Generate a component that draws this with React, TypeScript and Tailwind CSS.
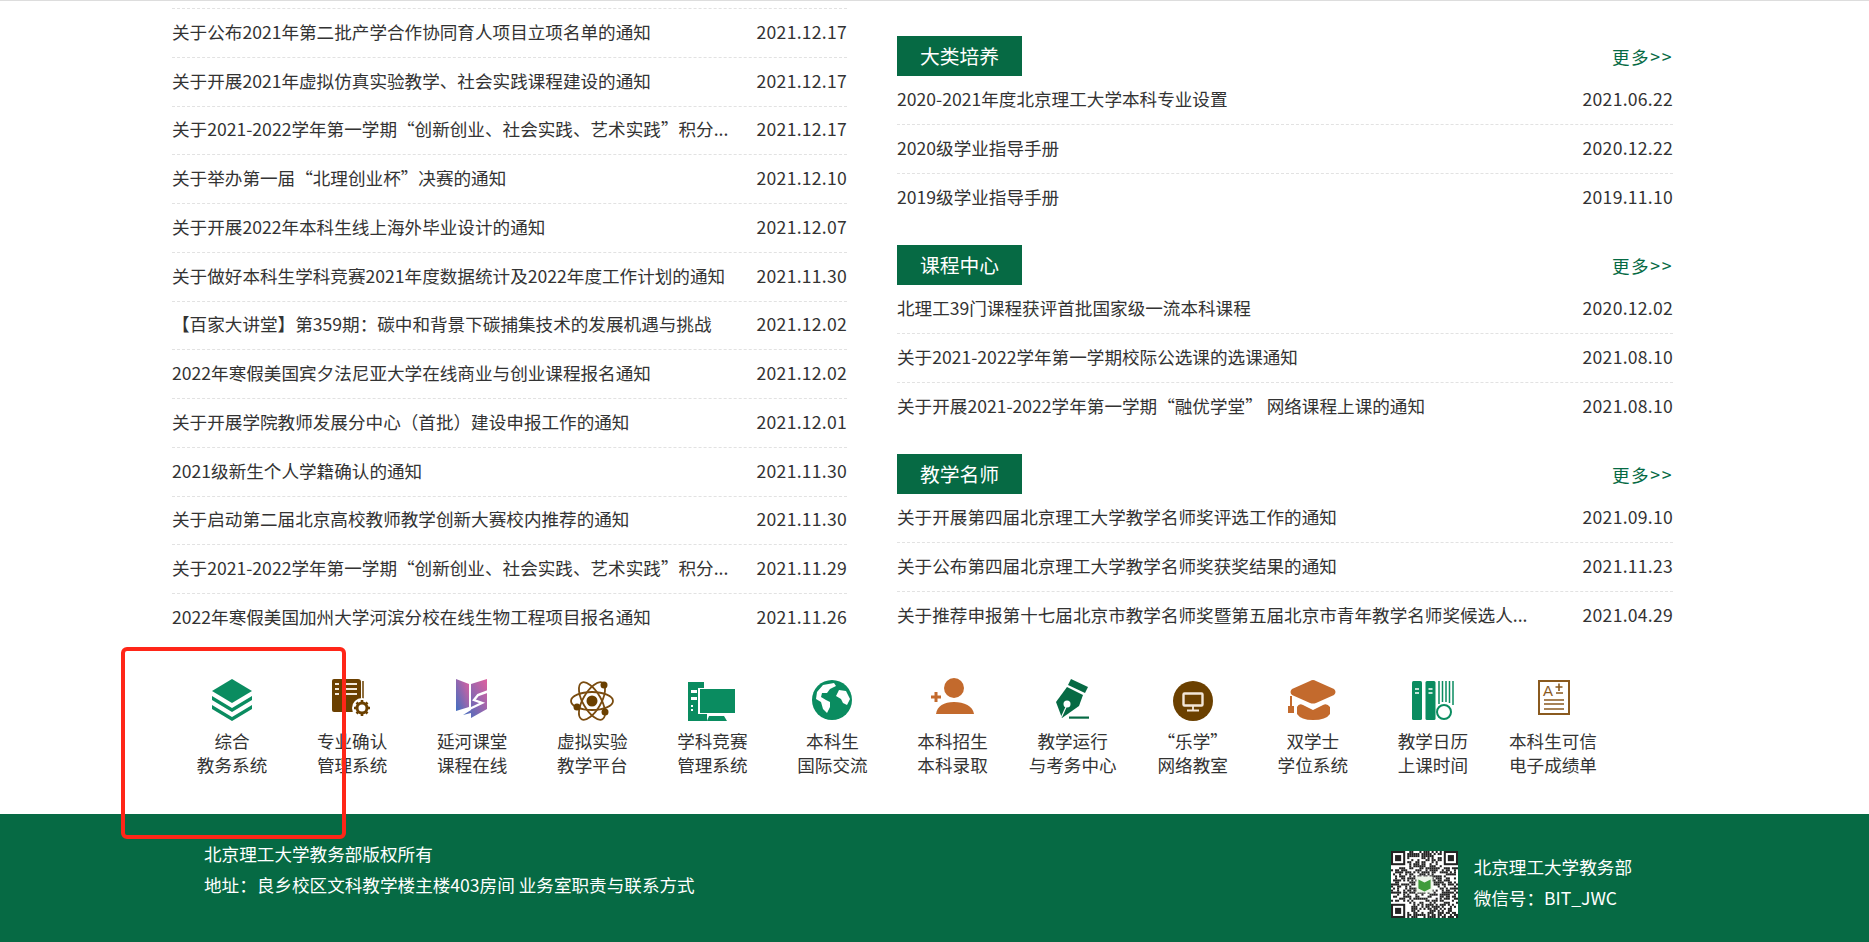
import React from 'react';

const leftRows = [
  ['关于公布2021年第二批产学合作协同育人项目立项名单的通知', '2021.12.17'],
  ['关于开展2021年虚拟仿真实验教学、社会实践课程建设的通知', '2021.12.17'],
  ['关于2021-2022学年第一学期“创新创业、社会实践、艺术实践”积分...', '2021.12.17'],
  ['关于举办第一届“北理创业杯”决赛的通知', '2021.12.10'],
  ['关于开展2022年本科生线上海外毕业设计的通知', '2021.12.07'],
  ['关于做好本科生学科竞赛2021年度数据统计及2022年度工作计划的通知', '2021.11.30'],
  ['【百家大讲堂】第359期：碳中和背景下碳捕集技术的发展机遇与挑战', '2021.12.02'],
  ['2022年寒假美国宾夕法尼亚大学在线商业与创业课程报名通知', '2021.12.02'],
  ['关于开展学院教师发展分中心（首批）建设申报工作的通知', '2021.12.01'],
  ['2021级新生个人学籍确认的通知', '2021.11.30'],
  ['关于启动第二届北京高校教师教学创新大赛校内推荐的通知', '2021.11.30'],
  ['关于2021-2022学年第一学期“创新创业、社会实践、艺术实践”积分...', '2021.11.29'],
  ['2022年寒假美国加州大学河滨分校在线生物工程项目报名通知', '2021.11.26'],
];

const sections = [
  {
    title: '大类培养',
    rows: [
      ['2020-2021年度北京理工大学本科专业设置', '2021.06.22'],
      ['2020级学业指导手册', '2020.12.22'],
      ['2019级学业指导手册', '2019.11.10'],
    ],
  },
  {
    title: '课程中心',
    rows: [
      ['北理工39门课程获评首批国家级一流本科课程', '2020.12.02'],
      ['关于2021-2022学年第一学期校际公选课的选课通知', '2021.08.10'],
      ['关于开展2021-2022学年第一学期“融优学堂” 网络课程上课的通知', '2021.08.10'],
    ],
  },
  {
    title: '教学名师',
    rows: [
      ['关于开展第四届北京理工大学教学名师奖评选工作的通知', '2021.09.10'],
      ['关于公布第四届北京理工大学教学名师奖获奖结果的通知', '2021.11.23'],
      ['关于推荐申报第十七届北京市教学名师奖暨第五届北京市青年教学名师奖候选人...', '2021.04.29'],
    ],
  },
];

const GREEN = '#0a8c60';
const BROWN = '#6b4000';
const ORANGE = '#c36a2d';

const icons: React.ReactNode[] = [
  <g fill={GREEN}>
    <path d="M24 3 44 15 24 27 4 15Z" />
    <path d="M4 20 24 32 44 20V24L24 36 4 24Z" />
    <path d="M4 29 24 41 44 29V33L24 45 4 33Z" />
  </g>,
  <g>
    <path d="M6 3H30Q33 3 33 6V36H6Q4 36 4 34V5Q4 3 6 3Z" fill={BROWN} />
    <path d="M35 5V26" stroke={BROWN} strokeWidth="1.5" />
    <path d="M15 8H29M15 13H29M15 18H29M7 8H11M7 13H11M7 18H11" stroke="#f3e9dc" strokeWidth="2" />
    <circle cx="34" cy="32" r="10" fill="#fff" />
    <circle cx="34" cy="32" r="5" fill="none" stroke={BROWN} strokeWidth="3" />
    <path d="M34 24V27M34 37V40M26 32H29M39 32H42M28.5 26.5 30.5 28.5M37.5 35.5 39.5 37.5M28.5 37.5 30.5 35.5M37.5 28.5 39.5 26.5" stroke={BROWN} strokeWidth="2.6" />
  </g>,
  <g>
    <defs>
      <linearGradient id="bookGrad" x1="0" y1="1" x2="1" y2="0">
        <stop offset="0" stopColor="#3f6fc0" />
        <stop offset="1" stopColor="#e0609f" />
      </linearGradient>
    </defs>
    <path d="M8 3 21 8V31L8 35Z" fill="url(#bookGrad)" />
    <path d="M23 8 39 3V33L23 42V37L15 39 23 34Z" fill="url(#bookGrad)" />
    <path d="M41 15 30 19 26 24 34 27 13 37" fill="none" stroke="#fff" strokeWidth="2.4" />
  </g>,
  <g fill="none" stroke="#7a4c10" strokeWidth="1.8">
    <ellipse cx="24" cy="25" rx="21" ry="9" />
    <ellipse cx="24" cy="25" rx="21" ry="9" transform="rotate(60 24 25)" />
    <ellipse cx="24" cy="25" rx="21" ry="9" transform="rotate(120 24 25)" />
    <circle cx="24" cy="25" r="5.5" fill={BROWN} stroke="none" />
    <circle cx="36" cy="9" r="3.5" fill={BROWN} stroke="none" />
    <circle cx="9" cy="31" r="3.5" fill={BROWN} stroke="none" />
    <circle cx="37" cy="36" r="3.5" fill={BROWN} stroke="none" />
  </g>,
  <g fill={GREEN}>
    <path d="M0 6H16V12H10V38H19V45H0Z" />
    <rect x="3" y="14" width="6" height="3" fill="#fff" />
    <rect x="3" y="21" width="6" height="3" fill="#fff" />
    <rect x="3" y="29" width="2" height="2" fill="#fff" />
    <rect x="3" y="33" width="2" height="2" fill="#fff" />
    <rect x="12" y="13" width="35" height="24" />
    <path d="M21 40H36L39 45H19Z" />
  </g>,
  <g>
    <circle cx="24" cy="24" r="20" fill={GREEN} />
    <path d="M15 9 26 7 28 10 22 13 19 17 14 17 13 21 18 24 22 26 22 31 19 37 15 33 13 26 8 23 9 16Z" fill="#fff" />
    <path d="M31 14 38 15 42 23 39 29 35 27 33 23 28 20Z" fill="#fff" />
  </g>,
  <g fill={ORANGE}>
    <circle cx="25" cy="12" r="10" />
    <path d="M7 38C8 30 15 26 25 26S44 30 45 38Z" />
    <path d="M5.5 16H8.5V19.5H12V22.5H8.5V26H5.5V22.5H2V19.5H5.5Z" />
  </g>,
  <g fill="#066a44">
    <path d="M22 3 39 11 36 17 19 9Z" />
    <path d="M18 11 34 19 30 30 13 42 7 26Z" />
    <circle cx="18" cy="28" r="3.5" fill="#fff" />
    <path d="M17.5 30 12.5 41" stroke="#fff" strokeWidth="1.2" />
    <rect x="20" y="40.5" width="20" height="2.2" />
  </g>,
  <g>
    <circle cx="24" cy="25" r="20" fill={BROWN} />
    <rect x="14.5" y="17.5" width="19" height="12" rx="1" fill="none" stroke="#f3e6d8" strokeWidth="2.4" />
    <path d="M24 30V34M18 34.5H30" stroke="#f3e6d8" strokeWidth="1.8" />
  </g>,
  <g fill={ORANGE}>
    <path d="M21 5Q24 3 27 5L45 13Q48 16 45 19L27 27Q24 28 21 27L3 19Q0 16 3 13Z" />
    <path d="M1 20H3V30H5V37H-1V30H1Z" />
    <path d="M8 31Q10 27 14 29L24 34 34 29Q38 27 41 31V38Q37 44 24 44 12 44 8 38Z" />
  </g>,
  <g fill={GREEN}>
    <rect x="3" y="5" width="10" height="39" rx="1.5" />
    <rect x="16.5" y="5" width="10" height="39" rx="1.5" />
    <path d="M6 13H10M6 17H10M19.5 13H23.5M19.5 17H23.5" stroke="#fff" strokeWidth="1.5" />
    <path d="M30 5V28M33.5 5V26M37 5V26M40.5 5V27M44 5V29" stroke={GREEN} strokeWidth="1.5" />
    <circle cx="35" cy="36" r="7" fill="#fff" stroke={GREEN} strokeWidth="2" />
  </g>,
  <g>
    <rect x="10" y="5" width="30" height="33" fill="none" stroke="#8a5a1f" strokeWidth="2" />
    <text x="14" y="20" fontSize="15" fill="#8a5a1f" fontFamily="Liberation Sans, sans-serif">A</text>
    <path d="M30 7.5V15M26.5 11H33.5M27 17H34M15 24H35M15 28H35M15 33H35" stroke="#8a5a1f" strokeWidth="1.6" />
  </g>,
];

const links = [
  ['综合', '教务系统'],
  ['专业确认', '管理系统'],
  ['延河课堂', '课程在线'],
  ['虚拟实验', '教学平台'],
  ['学科竞赛', '管理系统'],
  ['本科生', '国际交流'],
  ['本科招生', '本科录取'],
  ['教学运行', '与考务中心'],
  ['“乐学”', '网络教室'],
  ['双学士', '学位系统'],
  ['教学日历', '上课时间'],
  ['本科生可信', '电子成绩单'],
];

// fake QR: fixed pseudo random modules plus finder squares
const qrCells: [number, number][] = [];
let seed = 1234;
for (let y = 0; y < 33; y++) {
  for (let x = 0; x < 33; x++) {
    seed = (seed * 1103515245 + 12345) & 0x7fffffff;
    const inFinder = (x < 8 && y < 8) || (x > 24 && y < 8) || (x < 8 && y > 24);
    if (!inFinder && (seed >> 16) % 100 < 52) qrCells.push([x, y]);
  }
}

const Finder = ({ x, y }: { x: number; y: number }) => (
  <g>
    <rect x={x + 0.5} y={y + 0.5} width="6" height="6" fill="#fff" stroke="#222" />
    <rect x={x + 2} y={y + 2} width="3" height="3" fill="#222" />
  </g>
);

const QrCode = () => (
  <svg viewBox="0 0 33 33" className="w-[67px] h-[67px] bg-white shrink-0">
    {qrCells.map(([x, y]) => (
      <rect key={`${x}-${y}`} x={x} y={y} width="1" height="1" fill="#222" />
    ))}
    <Finder x={0} y={0} />
    <Finder x={26} y={0} />
    <Finder x={0} y={26} />
    <rect x="12.5" y="12.5" width="8" height="8" fill="#eef5ea" />
    <path d="M13.5 14 16.5 15.5 19.5 14V18.5L16.5 20 13.5 18.5Z" fill="#3f9b3a" />
  </svg>
);

const Row = ({ title, date, first }: { title: string; date: string; first?: boolean }) => (
  <div className={`flex items-center justify-between pb-[2px] ${first ? '' : 'border-t border-dashed border-[#e2e2e2]'} h-[49px]`}>
    <span className="whitespace-nowrap">{title}</span>
    <span className="tracking-[0.25px]">{date}</span>
  </div>
);

export default function App() {
  return (
    <div
      lang="zh-CN"
      className="relative h-[942px] w-[1869px] overflow-hidden bg-white border-t border-[#dddddd] text-[17.6px] leading-[24px] text-[#333333] font-['Noto_Sans_CJK_SC',sans-serif]"
    >
      <div className="flex pl-[172px] h-[641px]">
        <div className="w-[675px] pt-[7px]">
          {leftRows.map(([title, date]) => (
            <div
              key={title + date}
              className="flex items-center justify-between h-[48.75px] pb-[2px] border-t border-dashed border-[#e2e2e2]"
            >
              <span className="whitespace-nowrap">{title}</span>
              <span className="tracking-[0.25px]">{date}</span>
            </div>
          ))}
        </div>

        <div className="w-[776px] ml-[50px] pt-[35px]">
          {sections.map((section) => (
            <div key={section.title} className="mb-[23.2px]">
              <div className="flex items-center justify-between h-[40px]">
                <div className="w-[125px] h-[40px] bg-[#066a44] text-white text-[19.8px] flex items-center justify-center">
                  {section.title}
                </div>
                <span className="text-[#066a44] tracking-[1.6px] mt-[2px]">更多&gt;&gt;</span>
              </div>
              <div className="mt-[-1px]">
                {section.rows.map(([title, date], i) => (
                  <Row key={title} title={title} date={date} first={i === 0} />
                ))}
              </div>
            </div>
          ))}
        </div>
      </div>

      <div className="grid grid-cols-12 w-[1441px] ml-[172px] pt-[34px] h-[172px]">
        {links.map(([a, b], i) => (
          <div key={a + b} className="flex flex-col items-center text-center">
            <svg viewBox="0 0 48 48" className="w-[48px] h-[48px] overflow-visible">
              {icons[i]}
            </svg>
            <div className="mt-[5px] whitespace-nowrap">{a}</div>
            <div className="whitespace-nowrap">{b}</div>
          </div>
        ))}
      </div>

      <div className="flex items-start justify-between h-[128px] bg-[#066a44] text-white pl-[204px] pr-[237px]">
        <div className="pt-[24px] leading-[31px]">
          <div>北京理工大学教务部版权所有</div>
          <div>地址：良乡校区文科教学楼主楼403房间 业务室职责与联系方式</div>
        </div>
        <div className="flex items-start gap-[16px] pt-[37px]">
          <QrCode />
          <div className="leading-[31px]">
            <div>北京理工大学教务部</div>
            <div>微信号：BIT_JWC</div>
          </div>
        </div>
      </div>

      <div className="absolute left-[121px] top-[646px] w-[225px] h-[192px] border-[4px] border-[#ff2618] rounded-[6px]" />
    </div>
  );
}
